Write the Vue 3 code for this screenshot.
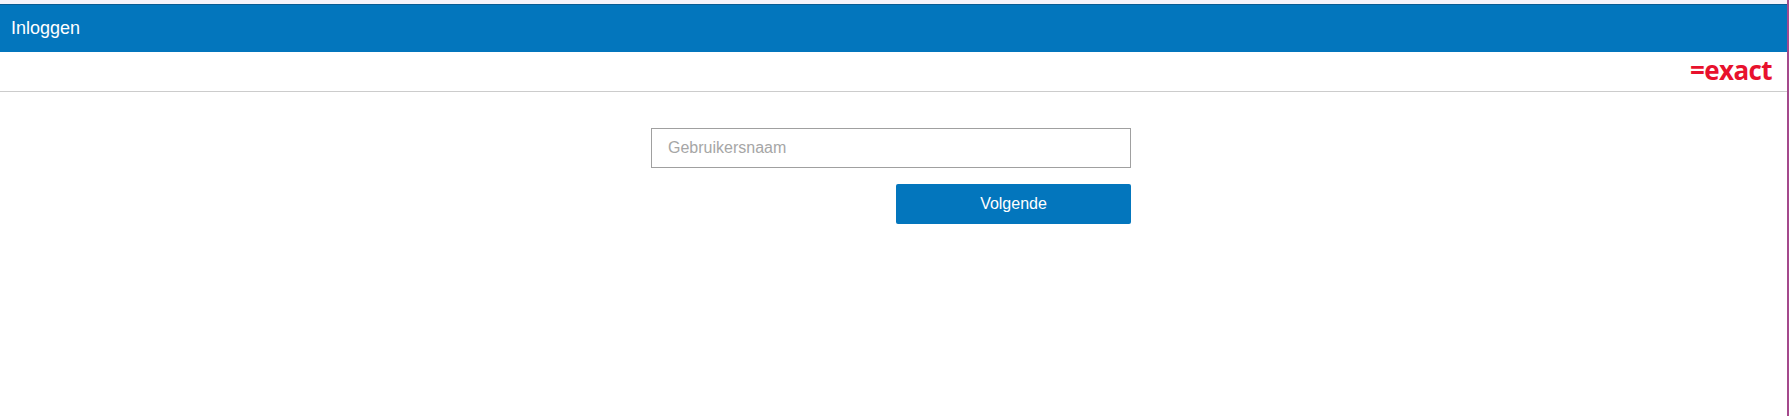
<template>
  <div class="page">
    <div class="top-strip"></div>
    <header class="title-bar">Inloggen</header>
    <div class="logo-row">
      <span class="logo">=exact</span>
    </div>
    <main class="login">
      <form class="login-form" @submit.prevent>
        <input v-model="username" type="text" class="username" placeholder="Gebruikersnaam">
        <button type="submit" class="next">Volgende</button>
      </form>
    </main>
  </div>
</template>

<script setup>
import { ref } from 'vue'

const username = ref('')
</script>

<style scoped>
.page {
  height: 416px;
  box-sizing: border-box;
  border-right: 2px solid #a4498c;
  background: #fff;
  font-family: "Liberation Sans", Arial, sans-serif;
  overflow: hidden;
}

.top-strip {
  height: 4px;
  background: #f5f3fa;
}

.title-bar {
  height: 48px;
  box-sizing: border-box;
  border-top: 1px solid #0a5c94;
  padding-left: 11px;
  background: #0376bd;
  color: #fff;
  font-size: 18px;
  line-height: 46px;
}

.logo-row {
  display: flex;
  justify-content: flex-end;
  align-items: center;
  height: 40px;
  box-sizing: border-box;
  padding-right: 15px;
  padding-bottom: 3px;
  border-bottom: 1px solid #ccc;
}

.logo {
  color: #e8112d;
  font-family: "Open Sans", sans-serif;
  font-size: 26px;
  font-weight: 700;
  line-height: 1;
  letter-spacing: -0.6px;
}

.login {
  display: flex;
  justify-content: center;
  padding-top: 36px;
}

.login-form {
  display: flex;
  flex-direction: column;
  align-items: flex-end;
  gap: 16px;
  width: 480px;
  margin-left: -5px;
}

.username {
  width: 100%;
  height: 40px;
  box-sizing: border-box;
  padding: 0 16px;
  border: 1px solid #a0a0a0;
  border-radius: 0;
  outline: none;
  font-family: inherit;
  font-size: 16px;
}

.username::placeholder {
  color: #a6a6a6;
  opacity: 1;
}

.next {
  width: 235px;
  height: 40px;
  border: none;
  border-radius: 2px;
  background: #0376bd;
  color: #fff;
  font-family: inherit;
  font-size: 16px;
}
</style>
